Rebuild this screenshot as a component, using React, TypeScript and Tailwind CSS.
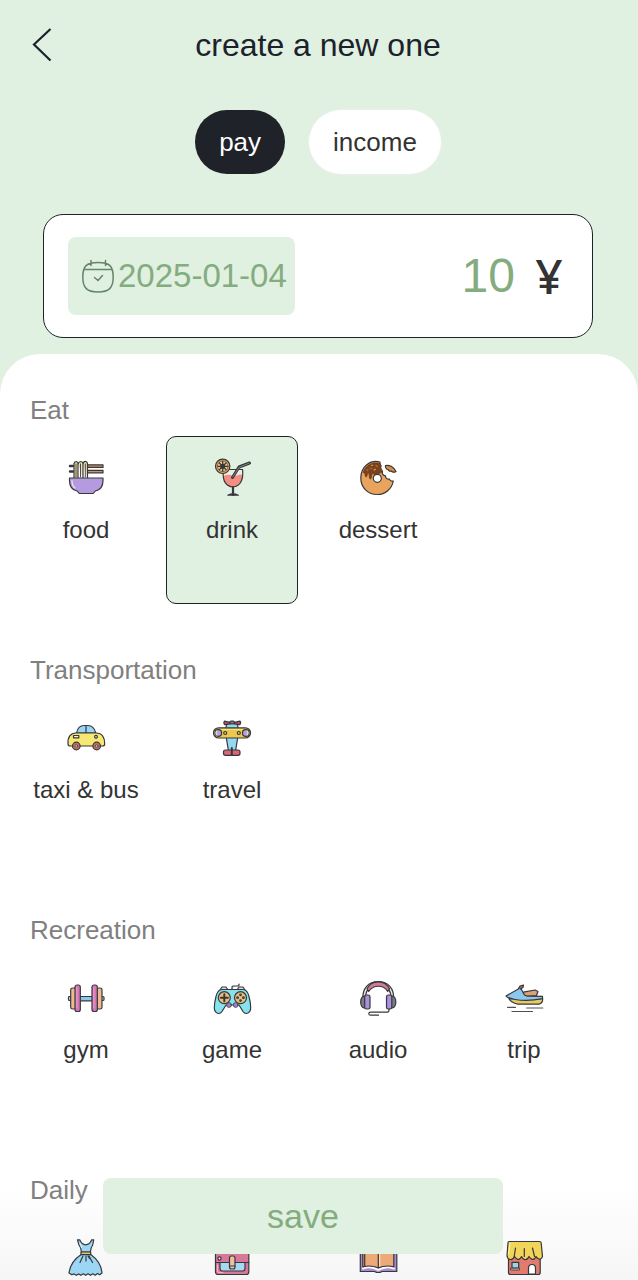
import { useState, type ReactNode } from "react";

const line = "#37383d";

function Icon({ children }: { children: ReactNode }) {
  return (
    <svg
      viewBox="0 0 40 40"
      className="size-10 shrink-0"
      fill="none"
      stroke={line}
      strokeWidth="1.2"
      strokeLinecap="round"
      strokeLinejoin="round"
      aria-hidden="true"
    >
      {children}
    </svg>
  );
}

const FoodIcon = () => (
  <Icon>
    <path d="M4 8h3M4 13.5h3" strokeWidth="2.4" />
    <path d="M21 6.800h16v2.600H21zM21 12.400h16v2.400H21z" fill="#c99468" />
    <path
      d="M8 20V5.500Q8.500 3.500 10.500 3.500Q12 3.800 12 6V20M12 6Q13 3.500 15 3.500Q17 3.800 17 6V20M17 6Q17.500 3.200 20 3.500Q21.500 4 21.500 6V20"
      fill="#f0dfb0"
    />
    <path d="M10 6V19M14.500 6V19M19.300 6V19" strokeWidth="0.9" />
    <path d="M3.500 20H37v2.500c0 6-3 9.500-7.500 10.500-1 .500-1.500 2-2.500 2.500H13.500c-1-.500-1.500-2-2.500-2.500C6.500 32 3.500 28.500 3.500 22.500z" fill="#b59ae0" />
    <path d="M6 22.500c0 3.500 1 6 3 7.500" stroke="#eee5fb" />
  </Icon>
);

const DrinkIcon = () => (
  <Icon>
    <path d="M11.500 11.500C10.500 21 13 28.500 21 29c8-.500 10.500-7 9.500-17.500z" fill="#e6efe8" stroke="none" />
    <path d="M11.400 18c.500 7 3.600 10.500 9.600 11 6-.500 9.200-5 9.600-12-4-2-6 2-10 .500-3-1-6-1-9.200.500z" fill="#f28f82" stroke="none" />
    <path d="M11.300 14C10.500 23 14 28.500 21 29c7-.500 10.700-7 9.600-17.500H17" />
    <path d="M20.500 19.500 27 9 37.500 5" strokeWidth="3" />
    <path d="M20.800 19 27.200 9.200 37 5.200" stroke="#8c9896" strokeWidth="0.800" />
    <path d="M21 29v8" strokeWidth="2.200" />
    <path d="M15.800 37.200q5-2.500 10.600 0z" fill="#8c9896" strokeWidth="1.200" />
    <circle cx="10.700" cy="8.300" r="7.200" fill="#e5a65b" />
    <circle cx="10.700" cy="8.300" r="5.300" fill="#f4ca82" strokeWidth=".6" />
    <path d="M10.700 3.500v9.600M6 8.300h9.500M7.400 5l6.600 6.600M14 5l-6.600 6.600" strokeWidth="1.300" />
    <circle cx="10.700" cy="8.300" r="2" fill={line} />
  </Icon>
);

const DessertIcon = () => (
  <Icon>
    <path d="M22 4C12 1.500 3 8.500 2.800 20c0 9.500 7 16.500 16.500 16.500 8 0 14.500-5.500 16-13.500-2 .500-3.500-.500-3.800-2-2.500.500-4.200-1.200-4-3.200-2.500-.300-3.800-2.300-3-4.300-2.300-1.500-3-3.500-1.500-5.500-1.200-1.200-1.500-2.600-1-4z" fill="#e8a35c" />
    <path d="M22 5.500C14 3 7.500 8 5 14.500c.800.500 1.300.200 1.700 1 .500 1 .300 3.500 1.500 3.500 1.500 0 .500-3.500 2-4 1.500 0 .500 6 2.200 6 1.600 0 1-4.500 2.300-5.500 1.500-1 1 2.500 2.300 2.300 2-.300 3.700-2.800 7.500-3.800.500-2-2.500-3.500-1.300-6.500-1-.700-1.500-1.200-1.200-2z" fill="#7a431f" stroke="#5a3420" strokeWidth=".6" />
    <path d="m12 10 1.500.7M18 7.500l1.300 1M9 12.500l1-1" stroke="#d65b39" />
    <path d="m16 12 1.300-.8M13.500 7.500l1-.3" stroke="#d9a63e" />
    <circle cx="19.300" cy="20.300" r="4" fill="#fff" />
    <path d="M27.500 7.500c4-.700 8.500 1.500 10.500 6-2.500 1.500-4 .500-5-.500-1.200.500-2.500-.200-2.800-1.500-1.800 0-3.200-2-2.700-4z" fill="#d98c45" />
  </Icon>
);

const TaxiIcon = () => (
  <Icon>
    <path d="M10.500 15C11.500 10 14 7.500 18 7.500h4c4 0 6.500 2.500 7.800 7.500z" fill="#9bd5f3" />
    <path d="M20 7.500V15" />
    <path d="M2 26c-.500-7 2.500-11 8-11h20c6 0 9 4.500 8.700 11 0 1.500-1 2-2.200 2H4.200C3 28 2 27.500 2 26z" fill="#f6e873" />
    <path d="M7.500 17.500h5.300v2.300H7.500z" fill="#fff8bc" />
    <circle cx="30" cy="18.700" r="1.400" fill="#fff8bc" />
    <circle cx="10.300" cy="28" r="3.800" fill="#c66d62" />
    <circle cx="30.700" cy="28" r="3.800" fill="#c66d62" />
    <circle cx="10.300" cy="28" r="1.300" fill="#eec1b5" strokeWidth=".7" />
    <circle cx="30.700" cy="28" r="1.300" fill="#eec1b5" strokeWidth=".7" />
  </Icon>
);

const PlaneIcon = () => (
  <Icon>
    <path d="M14 10c0-3 1-4.500 3-5h6c2 .500 3 2 3 5v8l-2.500 15h-7L14 18z" fill="#96d7f1" />
    <path d="M12.500 3.200 18 4.300v1.500l-5 .900q-2-1.500-.500-3.500zM28 3.200l-5.500 1.100v1.500l5 .900q2-1.500.500-3.500z" fill="#c95368" />
    <rect x="18" y="3" width="4.300" height="3" rx="1" fill="#75777c" />
    <rect x="1.500" y="9.800" width="37" height="10.200" rx="5.100" fill="#edc84e" />
    <path d="M10 11.500h20" stroke="#f9e387" />
    <circle cx="6.300" cy="15" r="3.300" fill="#b2a4d7" />
    <circle cx="33.800" cy="15" r="3.300" fill="#b2a4d7" />
    <path d="M5 13a2.500 2.500 0 0 0 0 4M35 13a2.500 2.500 0 0 1 0 4" stroke="#e7def2" />
    <circle cx="13.200" cy="15" r="1.500" />
    <circle cx="26.800" cy="15" r="1.500" />
    <rect x="11.500" y="32" width="16.500" height="5.300" rx="2" fill="#dc6577" />
    <path d="M19.800 30v7" strokeWidth="2" />
  </Icon>
);

const GymIcon = () => (
  <Icon>
    <path d="M4.700 18.500H3.500q-1 0-1 1v2q0 1 1 1h1.200M35.800 18.500H37q1 0 1 1v2q0 1-1 1h-1.200" fill="#b9d6e0" />
    <rect x="14" y="18.500" width="12.500" height="4.300" fill="#8bc8eb" />
    <rect x="4.700" y="10" width="5" height="21" rx="1.800" fill="#efbb8e" />
    <rect x="31" y="10" width="5" height="21" rx="1.800" fill="#efbb8e" />
    <rect x="9" y="7" width="5.300" height="26.500" rx="2" fill="#d778b6" />
    <rect x="26" y="7" width="5.300" height="26.500" rx="2" fill="#d778b6" />
    <path d="M10.800 9.500v20M27.800 9.500v20" stroke="#eca8d5" strokeWidth=".8" />
  </Icon>
);

const GameIcon = () => (
  <Icon>
    <path d="M20 11V9q0-1 1-1h5q1 0 1-1V6M8 12l2-3h4l2 3M25 12l2-3h4l2 3" fill="#d9dde0" />
    <path d="M10 11.500h21c3.500 0 5 3 6 7 1.500 6 2.500 11.500 1 14.500-1.500 3-5 3.500-7 .500l-4-6.500H14l-4 6.500c-2 3-5.500 2.500-7-.500-1.500-3-.500-8.500 1-14.500 1-4 2.500-7 6-7z" fill="#86e3ee" />
    <circle cx="12.300" cy="19.700" r="6" fill="#e9bd7e" />
    <circle cx="28.500" cy="19.700" r="6" fill="#e9bd7e" />
    <path d="M12.300 16.200v7M8.800 19.700h7" strokeWidth="2" />
    <circle cx="28.500" cy="16.800" r=".8" />
    <circle cx="28.500" cy="22.600" r=".8" />
    <circle cx="25.600" cy="19.700" r=".8" />
    <circle cx="31.400" cy="19.700" r=".8" />
    <circle cx="17" cy="27" r="2.400" fill="#9a83c9" strokeWidth=".8" />
    <circle cx="23.700" cy="27" r="2.400" fill="#9a83c9" strokeWidth=".8" />
  </Icon>
);

const AudioIcon = () => (
  <Icon>
    <path d="M5 21C4 10.500 10.500 3.500 20.200 3.500S36.500 10.500 35.500 21h-2.700c1-8-4-14-12.600-14S6.800 13 7.800 21z" fill="#e3e3e5" />
    <path d="M9 10.800c4-8.800 18-9.600 22.500 0l-1.800 2.700c-4-7-14.500-7-19 0z" fill="#ce7e91" />
    <path d="M7.500 18H6q-3.300 1-3.300 6T6 30h1.500M33 18h1.500q3.300 1 3.300 6t-3.300 6H33" fill="#7b7c83" />
    <rect x="6.700" y="17" width="5.300" height="14" rx="1.800" fill="#aa91dc" />
    <rect x="28.500" y="17" width="5.300" height="14" rx="1.800" fill="#aa91dc" />
    <path d="M31 31v1.500q0 1.700-1.700 1.700H12.500q-1.700 0-1.700 1.500t1.700 1.500h8" />
  </Icon>
);

const TripIcon = () => (
  <Icon>
    <path d="M5 20.500 36 21l2.500-.800c.500 3-.700 5.300-3.500 6H14C9 25.500 5.500 22.500 5 20.500z" fill="#e9ca61" />
    <path d="M19.500 14.200 31 12l3 1.500-1.500 4-10.500 1-2.500-1z" fill="#dda175" />
    <path d="M2 18 16.500 9.800l3.500 6.500q1 2 4 1.800l14.500.200v2.400C27 23 18 22.700 11 21.500 6.500 20.700 3 19.500 2 18z" fill="#8bc8ee" />
    <path d="m14.500 10.500 1.500-2.500 3.500-1-.500 2.500-2.500 1.500" fill="#a76a50" />
    <path d="M3.500 29.300h8M22.700 30h16M8 33.500h20.500" stroke="#4d5053" />
  </Icon>
);

const DressIcon = () => (
  <Icon>
    <path d="M11.500 1.800h2.200q2 5 6 5t6-5h2l-1 5.200c-1.500 2-2.200 4-2.300 7h-9c-.100-3-.800-5-2.400-7z" fill="#9bd6f5" />
    <path d="M15.200 16.500h9.500C31 21 35.500 28 36 35l-2.300 1.800-2.200-1.300-2.300 1.700-2.300-1.400-2.400 1.500-2.400-1.500-2.400 1.500-2.400-1.500-2.400 1.500-2.300-1.400-2.300 1.400-2.200-1.400-2.300.900L3 35C4 27.500 9 20.500 15.200 16.500z" fill="#9bd6f5" />
    <path d="M15 14h9.700v2.700H15z" fill="#e4c66d" />
    <path d="m17 18-3 6.500M20 18v5M23 18l3.500 6.500M22 18l1.500 2.500" />
    <path d="M14 5.500q1.500 2 1.500 4" stroke="#dff4ff" />
  </Icon>
);

const BagIcon = () => (
  <Icon>
    <rect x="3.500" y="4" width="33.300" height="32.500" rx="2.500" fill="#d77898" />
    <path d="M3.500 24.500h33.300" />
    <path d="M8 24.500h25v6q0 2.500-2.500 2.500h-20Q8 33 8 30.500z" fill="#a7d9f2" />
    <path d="M5.500 27v6q0 1.500 1.500 1.500h4" stroke="#efafc4" />
    <circle cx="7.500" cy="20.500" r="1.600" fill="#f9e9ef" />
    <rect x="17.500" y="18" width="5.500" height="13" rx="2" fill="#eec0a0" />
    <path d="M17.500 28h5.500" />
  </Icon>
);

const BookIcon = () => (
  <Icon>
    <path d="M2.300 8h36.500v25.500H24l-2 1h-3.500l-2-1H2.300z" fill="#a58bd0" />
    <path d="M5 30.500q8-3 15.300 1.500Q28 27.500 36 30.500" stroke="#fff" strokeWidth="2" />
    <path d="M4.800 6q8-3 15.500 1.500Q28 3 35.800 6v22.800q-8-2-15.500 1-7.500-3-15.500-1z" fill="#eda978" />
    <path d="M20.300 7.500v22M6.700 6v22.500" />
    <path d="M21.700 9v19" stroke="#ffe1c6" />
  </Icon>
);

const ShopIcon = () => (
  <Icon>
    <path d="M4.500 17h31.700v17.500q0 2-2 2H6.500q-2 0-2-2z" fill="#e17b6e" />
    <path d="M5 3.500h30.500q1.500 0 1.700 1.500l1.300 13.500q-1.700 4-4.500 2-1.500-1-2-2-2 4-4.500 2.500-1.500-.800-2.500-2.500-2 4-4.500 3-2-.800-3-3-2 4-4.500 2.500-1.500-.800-2.500-2.500-1.500 3.500-4.500 3-3-1-3-4L4 5q0-1.500 1-1.500z" fill="#f2d558" />
    <path d="m11.500 10-1.300 8.500M20.300 10.500v8M28.500 10l2 8.500" />
    <path d="M6 5.500 4.500 16" stroke="#fff1a2" />
    <path d="M8 24.300h6.700V30H8z" fill="#9fd4ed" />
    <path d="M7 30.200h8.500V32H7z" fill="#f3b3a8" strokeWidth=".8" />
    <path d="M24.500 36v-6q0-3.500 3.500-3.500t3.500 3.500v6z" fill="#fff" />
  </Icon>
);

type Item = { id: string; label?: string; icon: () => ReactNode };

const sections: { title: string; items: Item[] }[] = [
  {
    title: "Eat",
    items: [
      { id: "food", label: "food", icon: FoodIcon },
      { id: "drink", label: "drink", icon: DrinkIcon },
      { id: "dessert", label: "dessert", icon: DessertIcon },
    ],
  },
  {
    title: "Transportation",
    items: [
      { id: "taxi", label: "taxi & bus", icon: TaxiIcon },
      { id: "travel", label: "travel", icon: PlaneIcon },
    ],
  },
  {
    title: "Recreation",
    items: [
      { id: "gym", label: "gym", icon: GymIcon },
      { id: "game", label: "game", icon: GameIcon },
      { id: "audio", label: "audio", icon: AudioIcon },
      { id: "trip", label: "trip", icon: TripIcon },
    ],
  },
  {
    title: "Daily",
    items: [
      { id: "dress", icon: DressIcon },
      { id: "bag", icon: BagIcon },
      { id: "book", icon: BookIcon },
      { id: "shop", icon: ShopIcon },
    ],
  },
];

export default function App() {
  const [selected, setSelected] = useState("drink");
  const [kind, setKind] = useState("pay");
  const [amount, setAmount] = useState("10");

  return (
    <main className="relative flex h-screen flex-col overflow-hidden bg-[#e0f0e1] font-['Liberation_Sans',Arial,sans-serif] text-[#333]">
      <div className="flex shrink-0 flex-col pr-0.5">
        <header className="grid h-[90px] grid-cols-[80px_1fr_80px] items-center text-[#1b222b]">
          <button aria-label="Back" className="flex h-full items-center pl-8">
            <svg viewBox="0 0 20 36" className="h-9 w-5" fill="none" stroke="currentColor" strokeWidth="2.200" aria-hidden="true">
              <path d="M18.500 2 2 17.500 18.500 33.500" />
            </svg>
          </button>
          <h1 className="text-center text-[32px] leading-10">create a new one</h1>
        </header>

        <div className="mt-5 flex h-16 justify-center gap-6 text-[26px]">
          {["pay", "income"].map((name) => (
            <button
              key={name}
              aria-pressed={kind === name}
              onClick={() => setKind(name)}
              className={
                kind === name
                  ? "rounded-full bg-[#20222a] px-6 text-white"
                  : "rounded-full bg-white px-6 shadow-[0_0_0_1px_#edeeeb]"
              }
            >
              {name}
            </button>
          ))}
        </div>

        <div className="mx-[43px] mt-10 flex h-[124px] items-center justify-between rounded-[20px] border border-[#20222a] bg-white px-6">
          <button className="flex h-[78px] items-center rounded-lg bg-[#e0f0e1] pr-2 pl-3 text-[33px] text-[#84ac7e]">
            <svg viewBox="0 0 38 38" className="size-[38px]" fill="none" stroke="#658568" strokeWidth="1.500" strokeLinecap="round" aria-hidden="true">
              <path d="M18 5.500C6.500 5.500 2.800 9 2.800 20S7 35 18 35s15.200-4 15.200-15S29.500 5.500 18 5.500zM4 12.500h28M11 3.500v5M25.500 3.500v5M14.500 20.500l3.500 3 4.500-5" />
            </svg>
            2025-01-04
          </button>
          <label className="flex items-center gap-4 pr-px text-[48px] leading-[56px]">
            <input
              aria-label="Amount"
              value={amount}
              onChange={(event) => setAmount(event.target.value)}
              className="w-40 bg-transparent text-right text-[#84ac7e] outline-none"
            />
            <span className="w-9 text-center font-['Noto_Sans',sans-serif] font-medium">¥</span>
          </label>
        </div>
      </div>

      <div className="mt-4 min-h-0 flex-1 overflow-y-auto rounded-t-[40px] bg-linear-to-b from-white from-90% to-[#f6f6f6] px-5 pt-[41px] [scrollbar-width:none]">
        {sections.map((section) => (
          <section key={section.title} className="mb-[51px]">
            <h2 className="mb-[11px] px-2.5 text-[26px] leading-[30px] text-[#808080]">{section.title}</h2>
            <div className="flex flex-wrap gap-3.5">
              {section.items.map(({ id, label, icon: Drawing }) => (
                <button
                  key={id}
                  aria-label={label ?? id}
                  aria-pressed={selected === id}
                  onClick={() => setSelected(id)}
                  className={
                    selected === id
                      ? "flex h-[168px] w-[132px] flex-col items-center gap-4 rounded-[10px] border border-[#20222a] bg-[#e0f0e1] pt-[21px] text-2xl leading-8"
                      : "flex h-[168px] w-[132px] flex-col items-center gap-4 rounded-[10px] border border-transparent pt-[21px] text-2xl leading-8"
                  }
                >
                  <Drawing />
                  {label && <span className="whitespace-nowrap">{label}</span>}
                </button>
              ))}
            </div>
          </section>
        ))}
      </div>

      <button className="absolute bottom-[26px] left-1/2 h-[76px] w-[400px] -translate-x-[216px] rounded-lg bg-[#e0f0e1] text-[34px] text-[#84ac7e]">
        save
      </button>
    </main>
  );
}
